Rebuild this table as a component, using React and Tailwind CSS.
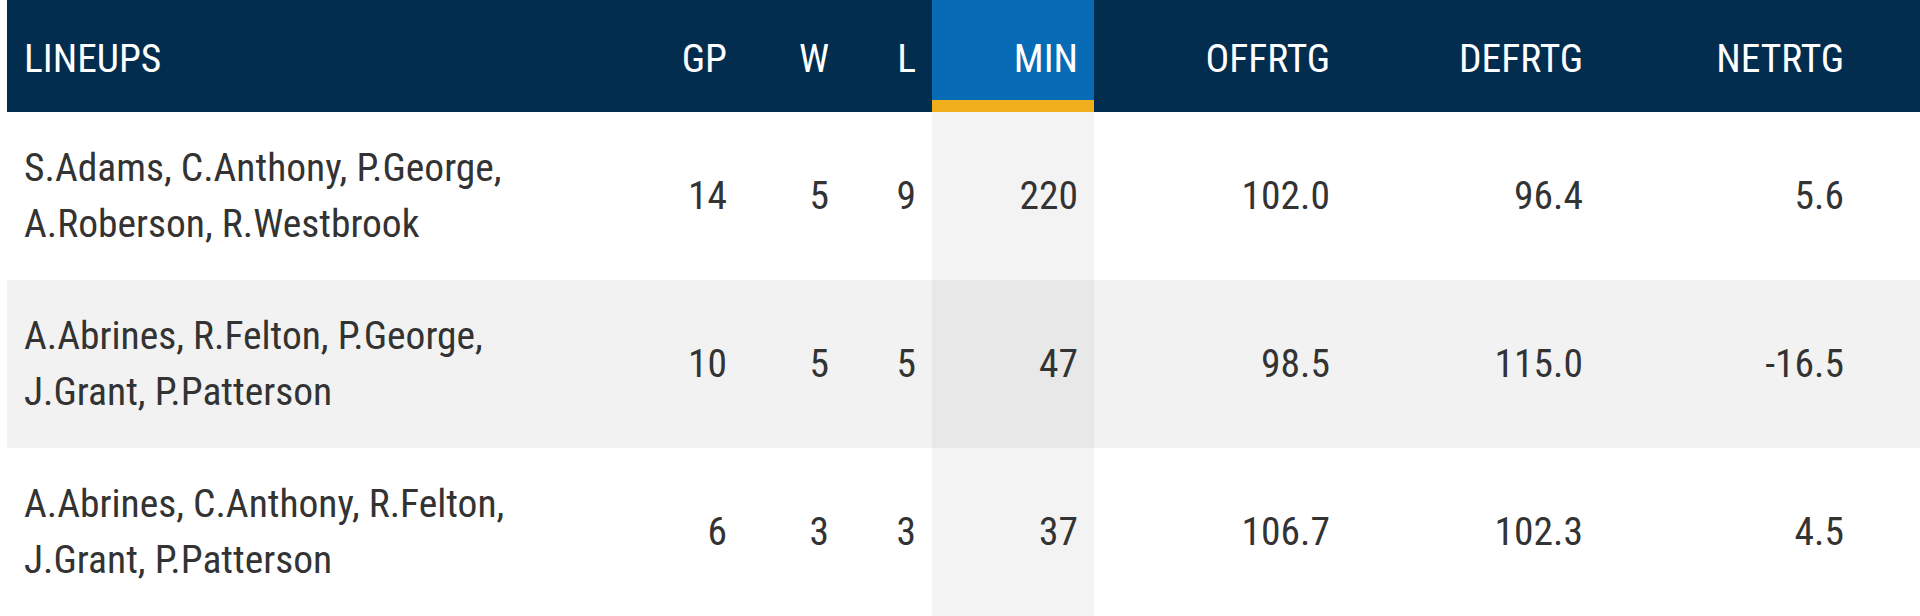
import React from "react";

const COLS = "grid grid-cols-[645px_91px_102px_87px_162px_252px_253px_261px_1fr]";

const ROWS = [
  { lineup: ["S.Adams, C.Anthony, P.George,", "A.Roberson, R.Westbrook"], gp: 14, w: 5, l: 9, min: 220, off: "102.0", def: "96.4", net: "5.6" },
  { lineup: ["A.Abrines, R.Felton, P.George,", "J.Grant, P.Patterson"], gp: 10, w: 5, l: 5, min: 47, off: "98.5", def: "115.0", net: "-16.5" },
  { lineup: ["A.Abrines, C.Anthony, R.Felton,", "J.Grant, P.Patterson"], gp: 6, w: 3, l: 3, min: 37, off: "106.7", def: "102.3", net: "4.5" },
];

export default function App() {
  return (
    <div className="w-[1920px] h-[616px] overflow-hidden bg-white pl-[7px] font-['Roboto_Condensed','Roboto',sans-serif] text-[39.5px]">
      {/* header */}
      <div className={`${COLS} h-[112px] bg-[#032d4f] text-white`}>
        <div className="flex items-center pl-[17px] pt-[6px]">LINEUPS</div>
        <div className="flex items-center justify-end pr-4 pt-[6px]">GP</div>
        <div className="flex items-center justify-end pr-4 pt-[6px]">W</div>
        <div className="flex items-center justify-end pr-4 pt-[6px]">L</div>
        <div className="flex items-center justify-end pr-4 pt-[18px] bg-[#086bb5] border-b-[12px] border-[#f0ad1c]">MIN</div>
        <div className="flex items-center justify-end pr-4 pt-[6px]">OFFRTG</div>
        <div className="flex items-center justify-end pr-4 pt-[6px]">DEFRTG</div>
        <div className="flex items-center justify-end pr-4 pt-[6px]">NETRTG</div>
        <div></div>
      </div>

      {ROWS.map((r, i) => {
        const odd = i % 2 === 1;
        return (
          <div key={i} className={`${COLS} h-[168px] text-[#333] ${odd ? "bg-[#f2f2f2]" : "bg-white"}`}>
            <div className="flex flex-col justify-center pl-[17px] leading-[56px]">
              <span>{r.lineup[0]}</span>
              <span>{r.lineup[1]}</span>
            </div>
            <div className="flex items-center justify-end pr-4">{r.gp}</div>
            <div className="flex items-center justify-end pr-4">{r.w}</div>
            <div className="flex items-center justify-end pr-4">{r.l}</div>
            <div className={`flex items-center justify-end pr-4 ${odd ? "bg-[#e8e8e8]" : "bg-[#f3f3f3]"}`}>{r.min}</div>
            <div className="flex items-center justify-end pr-4">{r.off}</div>
            <div className="flex items-center justify-end pr-4">{r.def}</div>
            <div className="flex items-center justify-end pr-4">{r.net}</div>
            <div></div>
          </div>
        );
      })}
    </div>
  );
}
